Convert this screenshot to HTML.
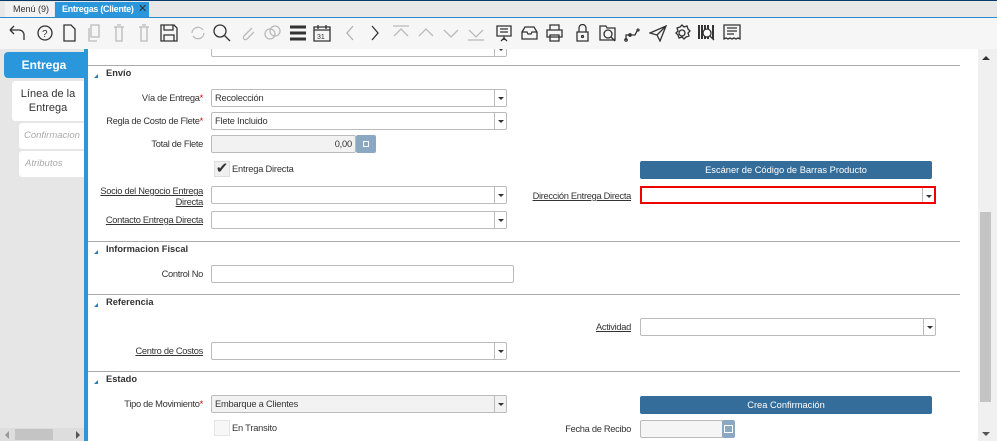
<!DOCTYPE html>
<html><head><meta charset="utf-8"><style>
*{box-sizing:border-box;margin:0;padding:0}
body{width:997px;height:441px;overflow:hidden;font-family:"Liberation Sans",sans-serif;font-size:10px;color:#333;background:#fff;position:relative}
.a{position:absolute}
.lbl{position:absolute;text-align:right;font-size:9.3px;letter-spacing:-0.3px;color:#333;white-space:nowrap}
.u{text-decoration:underline}
.req{color:#d00}
.inp{position:absolute;border:1px solid #bbb;background:#fff;height:18px;font-size:9.3px;letter-spacing:-0.2px;padding:3px 3px;border-radius:2px}
.dd{position:absolute;right:0;top:0;width:12px;height:100%;border-left:1px solid #bbb}
.dd:after{content:"";position:absolute;left:3px;top:7px;border-left:3px solid transparent;border-right:3px solid transparent;border-top:3px solid #333}
.sep{position:absolute;left:88px;width:872px;height:1px;background:#aaa}
.hd{position:absolute;left:106px;font-weight:bold;font-size:9.3px;color:#333}
.tri{position:absolute;left:94px;width:0;height:0;border-left:4px solid transparent;border-bottom:4px solid #2a7ac0}
.btn{position:absolute;background:#346d9a;color:#fff;text-align:center;font-size:9.3px;border-radius:2px;line-height:18px}
.ic{position:absolute;top:24px}
svg{fill:none;stroke:#333;stroke-width:1.3}
</style></head><body>
<!-- content top partial -->
<div class="inp" style="left:211px;top:40px;width:296px;height:17px"><div class="dd"></div></div>
<!-- tab bar -->
<div class="a" style="left:0;top:0;width:997px;height:18px;background:#e8e8e8;border-top:1px solid #0a3a6a;border-bottom:1px solid #2a8ad0"></div>
<div class="a" style="left:5px;top:2px;width:49px;height:15px;background:#f2f2f2;font-size:9px;color:#333;padding:2px 0 0 8px">Menú (9)</div>
<div class="a" style="left:55px;top:2px;width:94px;height:15px;background:#2a97dc;font-size:9px;letter-spacing:-0.3px;color:#fff;font-weight:bold;padding:2px 0 0 7px;white-space:nowrap">Entregas (Cliente)<span style="color:#333;font-weight:normal;font-size:11px;position:absolute;left:83px;top:0px">✕</span></div>
<!-- toolbar -->
<div class="a" style="left:0;top:18px;width:997px;height:31px;background:#f6f6f6"></div>
<svg class="ic" style="left:6px" width="20" height="18"><path d="M4 6h9a5 5 0 0 1 5 5v5M4 6l4-4M4 6l4 4"/></svg>
<svg class="ic" style="left:37px" width="16" height="18"><circle cx="8" cy="9" r="7"/><text x="5" y="13" font-size="10" fill="#333" stroke="none">?</text></svg>
<svg class="ic" style="left:62px" width="14" height="18"><path d="M2 1h7l4 4v12H2z"/></svg>
<svg class="ic" style="left:87px;opacity:.3" width="14" height="18"><path d="M4 1h8v12H4zM2 4v13h8"/></svg>
<svg class="ic" style="left:112px;opacity:.3" width="14" height="18"><path d="M2 3h10M4 3v14h6V3M5 1h4"/></svg>
<svg class="ic" style="left:137px;opacity:.3" width="14" height="18"><path d="M2 3h10M4 3v14h6V3M5 1h4"/></svg>
<svg class="ic" style="left:160px" width="18" height="18"><path d="M1 1h13l3 3v13H1zM4 1v5h9V1M4 17v-6h10v6"/></svg>
<svg class="ic" style="left:189px;opacity:.3" width="18" height="18"><path d="M3 9a6 6 0 0 1 11-3M15 9a6 6 0 0 1-11 3"/></svg>
<svg class="ic" style="left:213px" width="18" height="18"><circle cx="7" cy="7" r="6"/><path d="M11 11l6 6"/></svg>
<svg class="ic" style="left:238px;opacity:.3" width="18" height="18"><path d="M14 4L6 12a2 2 0 0 0 3 3l7-7"/></svg>
<svg class="ic" style="left:263px;opacity:.3" width="18" height="18"><circle cx="7" cy="10" r="5"/><circle cx="12" cy="7" r="5"/></svg>
<svg class="ic" style="left:288px" width="20" height="18"><path d="M2 3h16M2 9h16M2 15h16" stroke-width="3"/></svg>
<svg class="ic" style="left:313px" width="18" height="18"><path d="M1 3h16v14H1zM1 6h16M5 1v4M13 1v4"/><text x="4" y="15" font-size="7" fill="#333" stroke="none">31</text></svg>
<svg class="ic" style="left:343px;opacity:.35" width="14" height="18"><path d="M10 2L4 9l6 7"/></svg>
<svg class="ic" style="left:368px" width="14" height="18"><path d="M4 2l6 7-6 7"/></svg>
<svg class="ic" style="left:392px;opacity:.3" width="18" height="18"><path d="M1 2h16M2 12l7-7 7 7"/></svg>
<svg class="ic" style="left:417px;opacity:.3" width="18" height="18"><path d="M2 12l7-7 7 7"/></svg>
<svg class="ic" style="left:442px;opacity:.3" width="18" height="18"><path d="M2 6l7 7 7-7"/></svg>
<svg class="ic" style="left:467px;opacity:.3" width="18" height="18"><path d="M1 16h16M2 6l7 7 7-7"/></svg>
<svg class="ic" style="left:496px" width="16" height="18"><path d="M1 2h14v10H1zM4 5h8M4 8h8M8 12v4M5 17l3-3 3 3"/></svg>
<svg class="ic" style="left:521px" width="17" height="18"><path d="M1 8l3-5h9l3 5v7H1zM1 8h5l1 2h3l1-2h5"/></svg>
<svg class="ic" style="left:546px" width="17" height="18"><path d="M4 1h9v5H4zM1 6h15v7H1zM4 11h9v6H4z"/></svg>
<svg class="ic" style="left:575px" width="15" height="18"><path d="M4 8V4a3.5 3.5 0 0 1 7 0v4M2 8h11v9H2z"/><circle cx="7.5" cy="12.5" r="1"/></svg>
<svg class="ic" style="left:599px" width="18" height="18"><path d="M1 2h6l1 2h8v12H1z"/><circle cx="9" cy="10" r="4"/><path d="M12 13l4 4"/></svg>
<svg class="ic" style="left:624px" width="18" height="18"><path d="M2 16V11h4M6 11h5l2-4M14 5a1 1 0 1 0 .1 0"/><circle cx="2" cy="16" r="1.2"/><circle cx="6" cy="11" r="1.2"/></svg>
<svg class="ic" style="left:649px" width="18" height="18"><path d="M1 9l16-7-6 15-3-6zM8 11l9-9"/></svg>
<svg class="ic" style="left:673px" width="18" height="18"><circle cx="9" cy="9" r="3"/><path d="M9 1l2 2 3-1 1 3 2 2-2 2 1 3-3 1-2 2-2-2-3 1-1-3-2-2 2-2-1-3 3-1z"/></svg>
<svg class="ic" style="left:698px" width="18" height="18"><path d="M1 1v14M4 1v14M7 1v14M10 1v14M15 1v14" stroke-width="2"/><circle cx="9" cy="9" r="4" fill="#fff"/><path d="M12 12l4 4"/></svg>
<svg class="ic" style="left:723px" width="18" height="18"><path d="M1 1h16v14l-2-1-2 1-2-1-2 1-2-1-2 1-2-1-2 1zM4 4h10M4 7h10M4 10h7"/></svg>
<!-- left panel -->
<div class="a" style="left:0;top:49px;width:84px;height:392px;background:#e6e6e6"></div>
<div class="a" style="left:84px;top:49px;width:4px;height:392px;background:#2a97dc"></div>
<div class="a" style="left:4px;top:52px;width:80px;height:26px;background:#2a97dc;color:#fff;font-size:12px;text-align:center;line-height:26px;border-radius:4px 0 0 4px;font-weight:bold">Entrega</div>
<div class="a" style="left:12px;top:81px;width:72px;height:40px;background:#fff;font-size:11px;text-align:center;line-height:14px;padding-top:6px;border-radius:3px 0 0 3px">Línea de la<br>Entrega</div>
<div class="a" style="left:19px;top:123px;width:65px;height:26px;background:#fff;font-size:9.5px;color:#aaa;font-style:italic;padding:7px 0 0 5px;overflow:hidden;white-space:nowrap;border-radius:3px 0 0 3px">Confirmacion</div>
<div class="a" style="left:19px;top:151px;width:65px;height:26px;background:#fff;font-size:9.5px;color:#aaa;font-style:italic;padding:7px 0 0 6px;border-radius:3px 0 0 3px">Atributos</div>
<div class="a" style="left:0;top:428px;width:84px;height:13px;background:#ddd"></div>
<div class="a" style="left:15px;top:429px;width:38px;height:11px;background:#c4c4c4"></div>
<div class="a" style="left:5px;top:431px;border-right:4px solid #999;border-top:4px solid transparent;border-bottom:4px solid transparent"></div>
<div class="a" style="left:76px;top:431px;border-left:4px solid #555;border-top:4px solid transparent;border-bottom:4px solid transparent"></div>
<!-- right scrollbar -->
<div class="a" style="left:978px;top:49px;width:19px;height:392px;background:#f0f0f0"></div>
<div class="a" style="left:980px;top:212px;width:11px;height:190px;background:#c4c4c4"></div>
<div class="a" style="left:982px;top:56px;border-bottom:4px solid #333;border-left:4px solid transparent;border-right:4px solid transparent"></div>
<div class="a" style="left:982px;top:432px;border-top:4px solid #555;border-left:4px solid transparent;border-right:4px solid transparent"></div>
<!-- content -->
<div class="sep" style="top:65px"></div>
<div class="tri" style="top:74px"></div><div class="hd" style="top:68px">Envío</div>

<div class="lbl" style="right:794px;top:93px">Vía de Entrega<span class="req">*</span></div>
<div class="inp" style="left:211px;top:89px;width:296px">Recolección<div class="dd"></div></div>
<div class="lbl" style="right:794px;top:116px">Regla de Costo de Flete<span class="req">*</span></div>
<div class="inp" style="left:211px;top:112px;width:296px">Flete Incluido<div class="dd"></div></div>
<div class="lbl" style="right:794px;top:139px">Total de Flete</div>
<div class="inp" style="left:211px;top:135px;width:145px;background:#f2f2f2;text-align:right">0,00</div>
<div class="a" style="left:356px;top:135px;width:20px;height:18px;background:#8aa8c4;border-radius:2px"><div class="a" style="left:7px;top:6px;width:6px;height:6px;border:1px solid #fff"></div></div>
<div class="a" style="left:214px;top:161px;width:16px;height:16px;background:#f0f0f0;border:1px solid #ddd;font-size:15px;line-height:14px;color:#333;text-align:center">✔</div>
<div class="a" style="left:232px;top:164px;font-size:9.3px;letter-spacing:-0.2px">Entrega Directa</div>
<div class="btn" style="left:640px;top:161px;width:292px">Escáner de Código de Barras Producto</div>

<div class="lbl u" style="right:794px;top:186px;line-height:11px">Socio del Negocio Entrega<br>Directa</div>
<div class="inp" style="left:211px;top:186px;width:296px"><div class="dd"></div></div>
<div class="lbl u" style="right:366px;top:191px">Dirección Entrega Directa</div>
<div class="inp" style="left:640px;top:186px;width:296px;border:2px solid #e00;border-radius:0"><div class="dd" style="border-left-color:#bbb"></div></div>
<div class="lbl u" style="right:794px;top:215px">Contacto Entrega Directa</div>
<div class="inp" style="left:211px;top:211px;width:296px"><div class="dd"></div></div>

<div class="sep" style="top:241px"></div>
<div class="tri" style="top:250px"></div><div class="hd" style="top:244px">Informacion Fiscal</div>
<div class="lbl" style="right:794px;top:269px">Control No</div>
<div class="inp" style="left:211px;top:265px;width:303px"></div>

<div class="sep" style="top:294px"></div>
<div class="tri" style="top:303px"></div><div class="hd" style="top:297px">Referencia</div>
<div class="lbl u" style="right:366px;top:322px">Actividad</div>
<div class="inp" style="left:640px;top:318px;width:296px"><div class="dd"></div></div>
<div class="lbl u" style="right:794px;top:346px">Centro de Costos</div>
<div class="inp" style="left:211px;top:342px;width:296px"><div class="dd"></div></div>

<div class="sep" style="top:371px"></div>
<div class="tri" style="top:380px"></div><div class="hd" style="top:374px">Estado</div>
<div class="lbl" style="right:794px;top:399px">Tipo de Movimiento<span class="req">*</span></div>
<div class="inp" style="left:211px;top:395px;width:296px;background:#f2f2f2">Embarque a Clientes<div class="dd"></div></div>
<div class="btn" style="left:640px;top:396px;width:292px">Crea Confirmación</div>
<div class="a" style="left:214px;top:420px;width:16px;height:16px;background:#f7f7f7;border:1px solid #e4e4e4"></div>
<div class="a" style="left:232px;top:423px;font-size:9.3px;letter-spacing:-0.2px">En Transito</div>
<div class="lbl" style="right:366px;top:424px">Fecha de Recibo</div>
<div class="inp" style="left:640px;top:420px;width:83px;background:#f5f5f5"></div>
<div class="a" style="left:722px;top:420px;width:13px;height:18px;background:#8aa8c4;border-radius:2px"><div class="a" style="left:2px;top:5px;width:9px;height:8px;border:1px solid #fff"></div></div>
</body></html>
